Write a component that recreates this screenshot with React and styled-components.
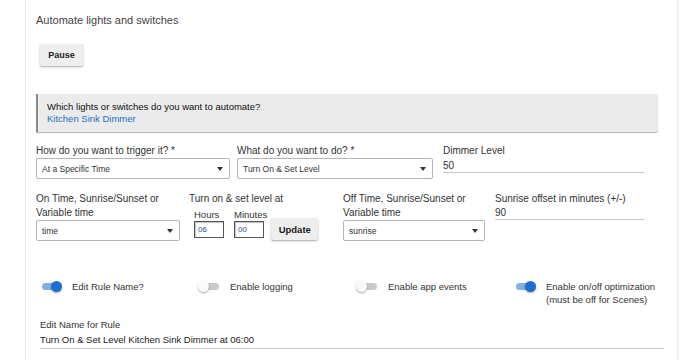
import React from "react";
import styled, { createGlobalStyle } from "styled-components";

const Global = createGlobalStyle`
  html, body { margin: 0; padding: 0; background: #fff; }
  body { font-family: "Liberation Sans", Arial, sans-serif; color: #333; }
  * { box-sizing: border-box; }
`;

const Page = styled.div`
  margin-left: 25px;
  width: 654px;
  min-height: 360px;
  border-left: 1px solid #ececec;
  border-right: 2px solid #f2f2f2;
  padding: 13px 0 0 10px;
`;

const Title = styled.div`
  font-size: 11px;
  line-height: 14px;
  color: #444;
`;

const Button = styled.button`
  font-family: "Liberation Sans", Arial, sans-serif;
  font-weight: bold;
  font-size: ${(p) => p.$size || 9}px;
  color: #222;
  background: #eeeeee;
  border: none;
  border-radius: 2px;
  box-shadow: 0 1px 2px rgba(0, 0, 0, 0.35);
  width: ${(p) => p.$w}px;
  height: ${(p) => p.$h}px;
  padding: 0;
`;

const PauseRow = styled.div`
  padding: 17px 0 0 4px;
  display: flex;
`;

const InfoBox = styled.div`
  margin-top: 28px;
  width: 622px;
  height: 38px;
  background: #ebebeb;
  border-left: 2px solid #8a8a8a;
  border-radius: 0 3px 3px 0;
  box-shadow: 0 1px 1px rgba(0, 0, 0, 0.3);
  padding: 7px 0 0 9px;
  font-size: 9.5px;
  line-height: 12px;
  color: #111;
`;

const Link = styled.div`
  color: #1b6fc8;
`;

const Grid = styled.div`
  display: grid;
  grid-template-columns: ${(p) => p.$cols};
  margin-top: ${(p) => p.$mt}px;
  width: 612px;
`;

const Field = styled.div`
  padding-right: ${(p) => p.$pr || 0}px;
  display: flex;
  flex-direction: column;
`;

const Label = styled.div`
  font-size: 10px;
  line-height: 14px;
  color: #333;
`;

const SelectBox = styled.div`
  height: 21px;
  border: 1px solid #b5b5b5;
  border-radius: 2px;
  display: flex;
  align-items: center;
  justify-content: space-between;
  padding: 0 6px 0 5px;
  font-size: 8.5px;
  color: #333;
  background: #fff;
`;

const Caret = styled.span`
  width: 0;
  height: 0;
  border-left: 3.5px solid transparent;
  border-right: 3.5px solid transparent;
  border-top: 4px solid #333;
`;

const LineInput = styled.div`
  height: ${(p) => p.$h || 15}px;
  border-bottom: 1px solid #c8c8c8;
  font-size: 10px;
  line-height: ${(p) => p.$h || 15}px;
  color: #333;
`;

const TimeRow = styled.div`
  display: flex;
  align-items: flex-end;
  gap: 4px;
  padding-left: 5px;
  margin-top: 2px;
`;

const TimeField = styled.div`
  display: flex;
  flex-direction: column;
  margin-right: 6px;
`;

const SmallLabel = styled.div`
  font-size: 9.5px;
  line-height: 13px;
  color: #333;
`;

const NumBox = styled.div`
  width: 30px;
  height: 17px;
  border: 1px solid #555;
  box-shadow: inset 1px 1px 1px rgba(0, 0, 0, 0.25);
  font-size: 8px;
  line-height: 15px;
  padding-left: 3px;
  color: #2a4f9a;
`;

const UpdateWrap = styled.div`
  margin-bottom: -2px;
  margin-left: -6px;
`;

const ToggleGrid = styled.div`
  display: grid;
  grid-template-columns: repeat(4, 158px);
  margin-top: 39px;
  padding-left: 4px;
`;

const ToggleItem = styled.div`
  display: flex;
  align-items: flex-start;
  gap: 10px;
`;

const Track = styled.div`
  position: relative;
  width: 22px;
  height: 13px;
  flex: none;
  &::before {
    content: "";
    position: absolute;
    left: 2px;
    right: 1px;
    top: 3px;
    height: 7px;
    border-radius: 4px;
    background: ${(p) => (p.$on ? "#7fb0e6" : "#c9c9c9")};
  }
  &::after {
    content: "";
    position: absolute;
    top: 1px;
    left: ${(p) => (p.$on ? "11px" : "0px")};
    width: 11px;
    height: 11px;
    border-radius: 50%;
    background: ${(p) => (p.$on ? "#1b6fd0" : "#fafafa")};
    box-shadow: 0 1px 2px rgba(0, 0, 0, 0.35);
  }
`;

const ToggleLabel = styled.div`
  font-size: 9.5px;
  line-height: 13px;
  color: #333;
`;

const NameBlock = styled.div`
  margin: 11px 0 0 4px;
  width: 624px;
`;

const NameLabel = styled.div`
  font-size: 9.5px;
  line-height: 15px;
  color: #333;
`;

const NameValue = styled.div`
  font-size: 9.5px;
  line-height: 15px;
  color: #222;
  padding-bottom: 1px;
  border-bottom: 1px solid #c8c8c8;
`;

const Select = ({ value }) => (
  <SelectBox>
    <span>{value}</span>
    <Caret />
  </SelectBox>
);

const Toggle = ({ on, children }) => (
  <ToggleItem>
    <Track $on={on} />
    <ToggleLabel>{children}</ToggleLabel>
  </ToggleItem>
);

export default function App() {
  return (
    <>
      <Global />
      <Page>
        <Title>Automate lights and switches</Title>
        <PauseRow>
          <Button $w={43} $h={22}>Pause</Button>
        </PauseRow>
        <InfoBox>
          <div>Which lights or switches do you want to automate?</div>
          <Link>Kitchen Sink Dimmer</Link>
        </InfoBox>

        <Grid $cols="201px 206px 205px" $mt={12}>
          <Field $pr={7}>
            <Label>How do you want to trigger it? *</Label>
            <Select value="At a Specific Time" />
          </Field>
          <Field $pr={10}>
            <Label>What do you want to do? *</Label>
            <Select value="Turn On & Set Level" />
          </Field>
          <Field $pr={4}>
            <Label>Dimmer Level</Label>
            <LineInput>50</LineInput>
          </Field>
        </Grid>

        <Grid $cols="153px 154px 152px 153px" $mt={13}>
          <Field $pr={9}>
            <Label>
              On Time, Sunrise/Sunset or
              <br />
              Variable time
            </Label>
            <Select value="time" />
          </Field>
          <Field>
            <Label>Turn on &amp; set level at</Label>
            <TimeRow>
              <TimeField>
                <SmallLabel>Hours</SmallLabel>
                <NumBox>06</NumBox>
              </TimeField>
              <TimeField>
                <SmallLabel>Minutes</SmallLabel>
                <NumBox>00</NumBox>
              </TimeField>
              <UpdateWrap>
                <Button $w={47} $h={22} $size={9.5}>Update</Button>
              </UpdateWrap>
            </TimeRow>
          </Field>
          <Field $pr={10}>
            <Label>
              Off Time, Sunrise/Sunset or
              <br />
              Variable time
            </Label>
            <Select value="sunrise" />
          </Field>
          <Field $pr={4}>
            <Label>Sunrise offset in minutes (+/-)</Label>
            <LineInput $h={14}>90</LineInput>
          </Field>
        </Grid>

        <ToggleGrid>
          <Toggle on>Edit Rule Name?</Toggle>
          <Toggle>Enable logging</Toggle>
          <Toggle>Enable app events</Toggle>
          <Toggle on>
            Enable on/off optimization
            <br />
            (must be off for Scenes)
          </Toggle>
        </ToggleGrid>

        <NameBlock>
          <NameLabel>Edit Name for Rule</NameLabel>
          <NameValue>Turn On &amp; Set Level Kitchen Sink Dimmer at 06:00</NameValue>
        </NameBlock>
      </Page>
    </>
  );
}
